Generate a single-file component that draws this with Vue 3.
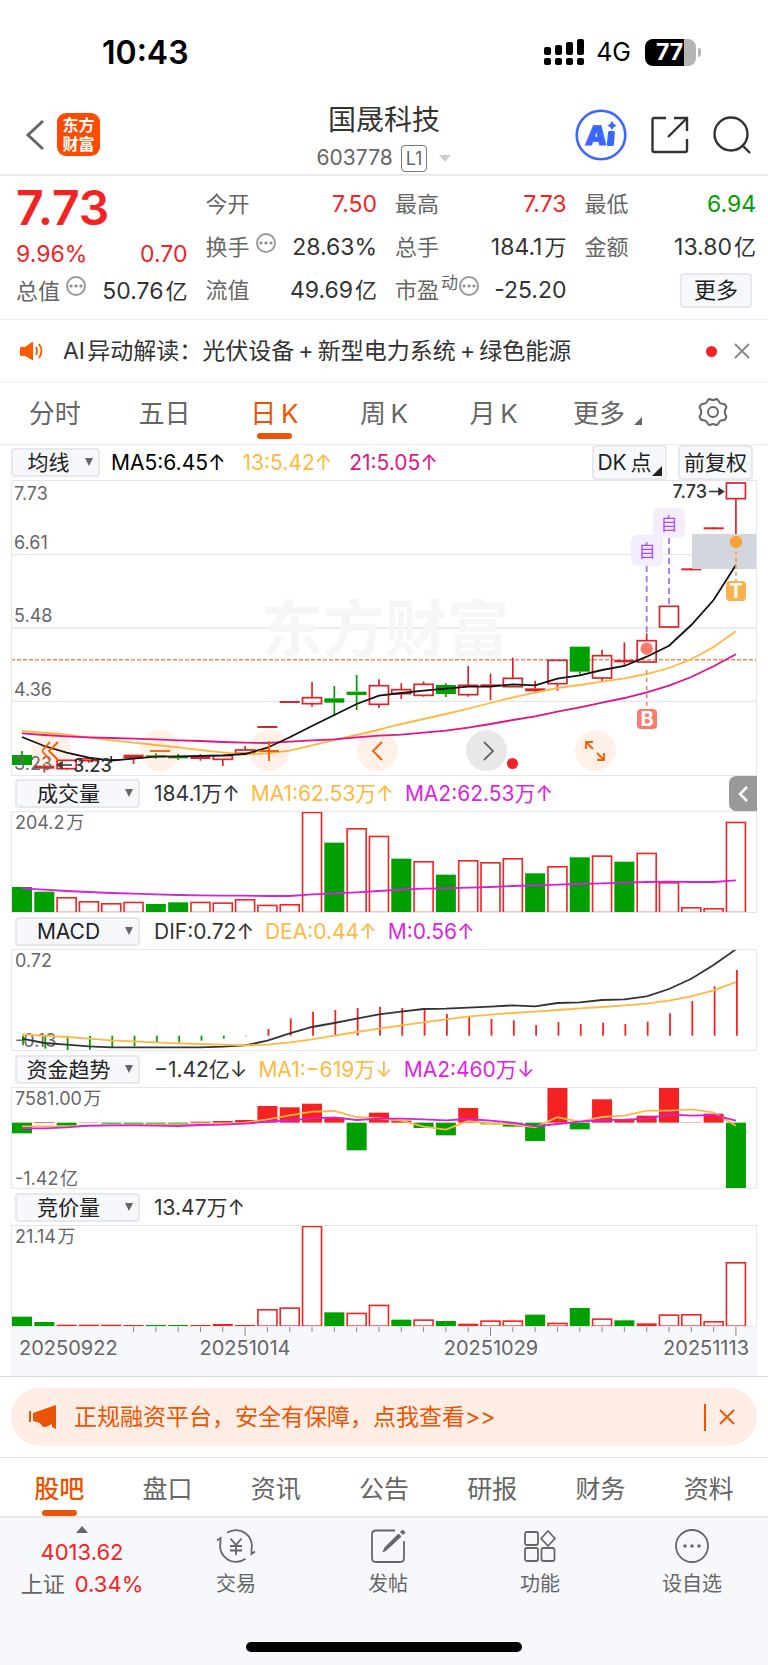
<script setup>
import { ref } from 'vue'

/* Series values are stored in device pixels (3 per CSS pixel), measured from the panel top. */
const STEP = 22.31
const BAR = 20
const cx = (i) => 11 + i * STEP
const line = (values, top) => values.map((v, i) => `${cx(i).toFixed(1)},${((v - top) / 3).toFixed(1)}`).join(' ')

/* [kind, body top, body bottom, high, low]; r = rising, g = falling, f = thin rising, n = flat */
const candleRows = [
  ['g', 855, 885, 843, 885], ['f', 887, 896, 881, 908], ['r', 871, 896, 871, 900], ['r', 866, 872, 862, 878],
  ['n', 867, 871, 858, 878], ['f', 854, 865, 854, 882], ['g', 856, 862, 850, 866], ['g', 859, 865, 852, 870],
  ['f', 860, 867, 852, 872], ['r', 857, 868, 857, 888], ['r', 840, 850, 828, 851], ['f', 768, 774, 770, 772],
  ['f', 693, 699, 695, 697], ['r', 683, 701, 636, 710], ['g', 685, 698, 648, 738], ['g', 665, 675, 615, 720],
  ['r', 647, 703, 628, 714], ['r', 659, 671, 640, 687], ['r', 643, 676, 634, 680], ['g', 645, 672, 640, 681],
  ['r', 646, 674, 588, 680], ['f', 643, 649, 611, 690], ['r', 625, 650, 563, 650], ['f', 655, 664, 632, 668],
  ['r', 571, 641, 571, 662], ['g', 530, 605, 530, 613], ['r', 557, 624, 540, 634], ['f', 570, 577, 517, 587],
  ['r', 512, 576, 490, 576], ['r', 409, 471, 409, 471], ['f', 295, 301, 297, 299], ['f', 172, 178, 174, 176],
  ['r', 39, 86, 39, 192]
]
const tone = { r: '#d4262c', f: '#d4262c', g: '#00a000', n: '#333333' }
const candles = candleRows.map(([kind, top, bottom, high, low], i) => ({
  x: cx(i), kind, color: tone[kind],
  top: (top - 30) / 3, bottom: (bottom - 30) / 3, high: (high - 30) / 3, low: (low - 30) / 3
}))
const ma5 = line([801, 828, 848, 863, 872, 866, 860, 859, 858, 856, 852, 833, 802, 768, 735, 702, 677, 669, 662, 656, 650, 650, 643, 646, 626, 616, 600, 588, 560, 527, 465, 390, 285], 30)
const ma13 = line([783, 788, 794, 802, 811, 818, 825, 832, 840, 847, 853, 850, 842, 826, 810, 795, 779, 762, 747, 732, 716, 699, 682, 668, 654, 645, 635, 625, 612, 594, 568, 531, 484], 30)
const ma21 = line([790, 795, 799, 802, 804, 806, 808, 811, 813, 816, 818, 819, 815, 811, 808, 802, 797, 794, 788, 782, 773, 762, 750, 739, 725, 712, 698, 684, 667, 647, 621, 589, 553], 30)

const green = (list) => new Set(list)
const columns = (tops, falling, base, panelTop) => tops.map((t, i) => ({
  x: cx(i), y: (t - panelTop) / 3, h: (base - t) / 3, down: falling.has(i)
}))
const volume = columns(
  [352, 366, 382, 394, 400, 396, 403, 398, 396, 398, 388, 405, 403, 126, 219, 175, 198, 267, 274, 315, 271, 277, 265, 311, 289, 263, 257, 276, 249, 337, 412, 415, 156],
  green([0, 1, 6, 7, 14, 17, 19, 23, 25, 27]), 431, 124)
const volumeMa = line([356, 360, 364, 367, 370, 372, 374, 376, 377, 378, 378, 379, 379, 374, 371, 368, 364, 360, 357, 356, 354, 352, 349, 347, 345, 343, 341, 339, 337, 336, 337, 337, 332], 124)

const macd = [826, 836, 842, 839, 833, 829, 818, 818, 812, 806, 799, 777, 745, 725, 720, 714, 710, 714, 718, 732, 740, 747, 751, 765, 756, 762, 758, 762, 755, 730, 693, 649, 600]
  .map((v, i) => ({ x: cx(i) + 1, y: (v - 537) / 3, up: v < 797 }))
const dif = line([806, 819, 824, 829, 832, 832, 832, 832, 832, 830, 826, 812, 790, 771, 759, 746, 733, 725, 717, 716, 713, 710, 706, 709, 699, 697, 690, 688, 679, 657, 626, 585, 538], 537)
const dea = line([793, 797, 801, 806, 811, 814, 817, 820, 822, 824, 826, 824, 817, 808, 797, 786, 776, 766, 757, 748, 740, 734, 729, 725, 720, 715, 711, 706, 701, 692, 679, 661, 636], 537)

const fund = [250, 216, 227, 217, 221, 221, 221, 221, 215, 213, 210, 168, 172, 161, 203, 301, 188, 212, 234, 256, 174, 223, 230, 273, 114, 238, 148, 210, 197, 113, 217, 191, 416]
  .map((v, i) => ({ x: cx(i), y: (Math.min(v, 218) - 111) / 3, h: Math.abs(v - 218) / 3, down: v > 218 }))
const fundMa1 = line([229, 229, 229, 228, 226, 225, 224, 224, 223, 222, 218, 208, 196, 185, 183, 201, 205, 212, 230, 239, 213, 221, 223, 232, 202, 215, 201, 197, 182, 182, 178, 187, 227], 111)
const fundMa2 = line([235, 235, 232, 227, 226, 226, 227, 228, 225, 224, 221, 215, 211, 205, 202, 210, 206, 206, 208, 211, 207, 212, 218, 229, 222, 215, 210, 209, 206, 193, 197, 195, 212], 111)

const auction = columns(
  [799, 815, 823, 823, 823, 824, 824, 824, 824, 821, 824, 776, 771, 526, 786, 787, 763, 808, 807, 812, 820, 810, 810, 793, 817, 773, 804, 810, 819, 792, 791, 812, 635],
  green([0, 1, 6, 7, 14, 17, 19, 23, 25, 27]), 830, 524)
const ticks = Array.from({ length: 28 }, (_, k) => k + 5).map((i) => ({ x: cx(i), h: [10, 21, 32].includes(i) ? 9 : 5 }))

const periods = ['分时', '五日', '日K', '周K', '月K', '更多']
const activePeriod = ref('日K')
const sections = ['股吧', '盘口', '资讯', '公告', '研报', '财务', '资料']
const activeSection = ref('股吧')
</script>

<template>
  <div class="page">
    <div class="status">
      <span class="clock">10:43</span>
      <div class="status-right">
        <svg width="40" height="28" viewBox="0 0 40 28" aria-hidden="true">
          <g fill="#000">
            <rect x="0" y="9" width="7" height="8" rx="2" /><rect x="11" y="7" width="7" height="10" rx="2" />
            <rect x="22" y="4" width="7" height="13" rx="2" /><rect x="33" y="1" width="7" height="16" rx="2" />
            <rect x="0" y="20" width="7" height="7" rx="2" /><rect x="11" y="20" width="7" height="7" rx="2" />
            <rect x="22" y="20" width="7" height="7" rx="2" /><rect x="33" y="20" width="7" height="7" rx="2" />
          </g>
        </svg>
        <span class="network">4G</span>
        <span class="battery"><span class="battery-level">77</span></span>
      </div>
    </div>

    <header class="header">
      <div class="header-left">
        <button class="icon-button" aria-label="返回">
          <svg width="20" height="32" viewBox="0 0 20 32"><path d="M18 2 L3 16 L18 30" fill="none" stroke="#666" stroke-width="3" /></svg>
        </button>
        <a href="#" class="brand"><span>东方</span><span>财富</span></a>
      </div>
      <div class="title">
        <h1>国晟科技</h1>
        <div class="code"><span>603778</span><span class="level">L1</span><svg width="12" height="7" viewBox="0 0 12 7"><path d="M0 0H12L6 7Z" fill="#ccc" /></svg></div>
      </div>
      <div class="header-right">
        <button class="icon-button" aria-label="AI">
          <svg width="52" height="52" viewBox="0 0 52 52">
            <circle cx="26" cy="26" r="24.3" fill="#fff" stroke="#3a68ff" stroke-width="2.600" />
            <g transform="skewX(-5)">
              <text x="13" y="36" class="ai-letter">A</text>
              <rect x="35" y="22" width="7" height="15" rx="1.500" fill="#3a68ff" />
            </g>
            <path d="M37 12 Q38.200 15.300 41.500 16.500 Q38.200 17.700 37 21 Q35.800 17.700 32.500 16.500 Q35.800 15.300 37 12Z" fill="#3a68ff" />
          </svg>
        </button>
        <button class="icon-button" aria-label="分享">
          <svg width="38" height="38" viewBox="0 0 38 38"><g fill="none" stroke="#333" stroke-width="2.400"><path d="M15 2H3Q1.500 2 1.500 4V34Q1.500 36 3.500 36H34Q36 36 36 34V23" /><path d="M23 2H36V15M35.500 2.500L17 21" /></g></svg>
        </button>
        <button class="icon-button" aria-label="搜索">
          <svg width="38" height="38" viewBox="0 0 38 38"><g fill="none" stroke="#333" stroke-width="2.400"><circle cx="18" cy="18" r="16.500" /><path d="M29 29L37 37" /></g></svg>
        </button>
      </div>
    </header>

    <section class="quote">
      <div class="quote-col">
        <div class="price">7.73</div>
        <div class="change"><span>9.96%</span><span>0.70</span></div>
        <div class="cell short"><span class="label">总值<i class="more-dot"></i></span><span>50.76<small>亿</small></span></div>
      </div>
      <div class="quote-col">
        <div class="cell"><span class="label">今开</span><span class="up">7.50</span></div>
        <div class="cell"><span class="label">换手<i class="more-dot"></i></span><span>28.63%</span></div>
        <div class="cell"><span class="label">流值</span><span>49.69<small>亿</small></span></div>
      </div>
      <div class="quote-col">
        <div class="cell"><span class="label">最高</span><span class="up">7.73</span></div>
        <div class="cell"><span class="label">总手</span><span>184.1<small>万</small></span></div>
        <div class="cell"><span class="label">市盈<sup>动</sup><i class="more-dot tight"></i></span><span>-25.20</span></div>
      </div>
      <div class="quote-col">
        <div class="cell"><span class="label">最低</span><span class="down">6.94</span></div>
        <div class="cell"><span class="label">金额</span><span>13.80<small>亿</small></span></div>
        <div class="cell end"><button class="chip more">更多</button></div>
      </div>
    </section>

    <div class="news">
      <svg width="24" height="20" viewBox="0 0 24 20" aria-hidden="true"><path d="M1 6H5L12 1Q13 0 13 2V18Q13 20 12 19L5 15H1Q0 15 0 14V7Q0 6 1 6Z" fill="#ff5a00" /><path d="M16 6Q18 10 16 14M19 3Q24 10 19 17" fill="none" stroke="#ff5a00" stroke-width="1.800" /></svg>
      <a href="#">AI&#8202;异动解读：光伏设备&#8201;+&#8201;新型电力系统&#8201;+&#8201;绿色能源</a>
      <span class="red-dot"></span>
      <button class="icon-button" aria-label="关闭"><svg width="16" height="16" viewBox="0 0 16 16"><path d="M1 1L15 15M15 1L1 15" stroke="#888" stroke-width="1.800" /></svg></button>
    </div>

    <nav class="periods">
      <button v-for="p in periods" :key="p" :class="{ active: p === activePeriod }" @click="activePeriod = p">{{ p.replace('K', '\u2009K') }}<i v-if="p === '更多'" class="corner"></i></button>
      <button class="gear" aria-label="设置">
        <svg width="30" height="30" viewBox="0 0 30 30"><g fill="none" stroke="#666" stroke-width="2"><path d="M10 3Q11 1.500 13 2.500Q15 3.600 17 2.500Q19 1.500 20 3L21.500 5.500Q22.500 6.800 24.500 6.700Q27 6.700 28 9Q28.800 10.500 27.500 12Q26 15 27.500 18Q28.800 19.500 28 21Q27 23.300 24.500 23.300Q22.500 23.200 21.500 24.500L20 27Q19 28.500 17 27.500Q15 26.400 13 27.500Q11 28.500 10 27L8.500 24.500Q7.500 23.200 5.500 23.300Q3 23.300 2 21Q1.200 19.500 2.500 18Q4 15 2.500 12Q1.200 10.500 2 9Q3 6.700 5.500 6.700Q7.500 6.800 8.500 5.500Z" /><circle cx="15" cy="15" r="5" /></g></svg>
      </button>
    </nav>

    <main class="charts">
      <div class="bar-head main-head">
        <button class="chip select narrow">均线</button>
        <div class="values wide"><span class="black">MA5:6.45<b>↑</b></span><span class="yellow">13:5.42<b>↑</b></span><span class="pink">21:5.05<b>↑</b></span></div>
        <button class="chip tall dk">DK&#8201;点<i class="corner dark"></i></button>
        <button class="chip tall">前复权</button>
      </div>

      <div class="panel">
        <svg class="plot" viewBox="0 0 746 296">
          <g stroke="#e1e5ee" stroke-width="1.300"><path d="M0 74.700H746M0 148H746M0 221.300H746" /></g>
          <text x="374" y="172" class="watermark">东方财富</text>
          <path d="M0 179.700H746" stroke="#f08a55" stroke-width="1.600" stroke-dasharray="4 2" />
          <g v-for="(c, i) in candles" :key="i" :stroke="c.color" stroke-width="1.700">
            <line :x1="c.x" :x2="c.x" :y1="c.high" :y2="c.top" />
            <line :x1="c.x" :x2="c.x" :y1="c.bottom" :y2="c.low" />
            <rect v-if="c.kind === 'r'" :x="c.x - 9.500" :y="c.top" width="19" :height="c.bottom - c.top" fill="none" />
            <rect v-else :x="c.x - 10" :y="c.top" width="20" :height="c.bottom - c.top" :fill="c.color" stroke="none" />
          </g>
          <rect x="681" y="54" width="65" height="35" fill="#d3d6dc" />
          <g fill="none" stroke-width="1.800">
            <polyline :points="ma13" stroke="#ffb840" /><polyline :points="ma21" stroke="#e0148c" /><polyline :points="ma5" stroke="#111" />
          </g>
          <g stroke="#b06cff" stroke-width="1.800" stroke-dasharray="6 4"><path d="M635.700 86V153M658 58V126" /></g>
          <g fill="#f4edfe"><rect x="620" y="55" width="32" height="31" rx="6" /><rect x="642" y="28" width="32" height="30" rx="6" /></g>
          <text x="636" y="77" class="flag">自</text><text x="658" y="50" class="flag">自</text>
          <circle cx="635.700" cy="168.700" r="6.200" fill="#ff7a6b" />
          <path d="M635.700 190V228" stroke="#ff7a6b" stroke-width="1.500" stroke-dasharray="4 4" />
          <rect x="626" y="229" width="20" height="20" rx="4" fill="#ff7a6b" /><text x="636" y="246" class="mark">B</text>
          <path d="M725 64V101" stroke="#f7a23b" stroke-width="1.500" stroke-dasharray="4 3" />
          <circle cx="725" cy="62" r="6.200" fill="#f7a23b" />
          <rect x="715" y="101" width="20" height="20" rx="4" fill="#ffb04d" /><text x="725" y="118" class="mark">T</text>
          <path d="M698 11.500H712M708 8.500L712.500 11.500L708 14.500Z" stroke="#333" fill="#333" stroke-width="1.500" />
          <path d="M61 285H48M51 282L46.500 285L51 288Z" stroke="#333" fill="#333" stroke-width="1.500" />
          <text x="696" y="18" class="peak end-anchor">7.73</text>
          <text x="62" y="292" class="peak">3.23</text>
          <g class="axis"><text x="3" y="20">7.73</text><text x="3" y="69">6.61</text><text x="3" y="142">5.48</text><text x="3" y="216">4.36</text><text x="3" y="290">3.23</text></g>
        </svg>
        <div class="tools">
          <button aria-label="最左"><svg width="20" height="20" viewBox="0 0 20 20"><path d="M8 1L0 10L8 19M16 1L7 10L16 19" /></svg></button>
          <button aria-label="缩小"><svg width="20" height="20" viewBox="0 0 20 20"><path d="M0 10H20" /></svg></button>
          <button aria-label="放大"><svg width="20" height="20" viewBox="0 0 20 20"><path d="M0 10H20M10 0V20" /></svg></button>
          <button aria-label="左移"><svg width="20" height="20" viewBox="0 0 20 20"><path d="M14 1L5 10L14 19" /></svg></button>
          <button class="grey" aria-label="右移"><svg width="20" height="20" viewBox="0 0 20 20"><path d="M7 1L16 10L7 19" /></svg></button>
          <button aria-label="全屏"><svg width="20" height="20" viewBox="0 0 20 20"><path d="M1 8V1H8M1 1L8 8M19 12V19H12M19 19L12 12" /></svg></button>
          <span class="red-dot tool-dot"></span>
        </div>
      </div>

      <div class="bar-head">
        <button class="chip select">成交量</button>
        <div class="values"><span>184.1万<b>↑</b></span><span class="yellow">MA1:62.53万<b>↑</b></span><span class="purple">MA2:62.53万<b>↑</b></span></div>
        <button class="collapse" aria-label="展开"><svg width="10" height="16" viewBox="0 0 10 16"><path d="M9 1L2 8L9 15" fill="none" stroke="#fff" stroke-width="2.500" /></svg></button>
      </div>
      <div class="panel sub">
        <svg class="plot" viewBox="0 0 746 102">
          <g v-for="(b, i) in volume" :key="i">
            <rect v-if="b.down" :x="b.x - BAR / 2" :y="b.y" :width="BAR" :height="b.h" fill="#00a000" />
            <rect v-else :x="b.x - 9.500" :y="b.y + 0.800" width="19" :height="b.h - 1.600" fill="#fff" stroke="#f52222" stroke-width="1.600" />
          </g>
          <polyline :points="volumeMa" fill="none" stroke="#d61fe0" stroke-width="1.800" />
          <text x="4" y="18" class="axis">204.2&#8202;万</text>
        </svg>
      </div>

      <div class="bar-head">
        <button class="chip select">MACD</button>
        <div class="values"><span>DIF:0.72<b>↑</b></span><span class="yellow">DEA:0.44<b>↑</b></span><span class="purple">M:0.56<b>↑</b></span></div>
      </div>
      <div class="panel sub">
        <svg class="plot" viewBox="0 0 746 102">
          <line v-for="(b, i) in macd" :key="i" :x1="b.x" :x2="b.x" y1="86.700" :y2="b.y" :stroke="b.up ? '#f52222' : '#00a000'" stroke-width="1.800" />
          <text x="4" y="18" class="axis">0.72</text><text x="4" y="98" class="axis">-0.13</text>
          <polyline :points="dif" fill="none" stroke="#333" stroke-width="1.800" />
          <polyline :points="dea" fill="none" stroke="#ffb840" stroke-width="1.800" />
        </svg>
      </div>

      <div class="bar-head">
        <button class="chip select">资金趋势</button>
        <div class="values"><span>−1.42亿<b>↓</b></span><span class="yellow">MA1:−619万<b>↓</b></span><span class="purple">MA2:460万<b>↓</b></span></div>
      </div>
      <div class="panel sub">
        <svg class="plot" viewBox="0 0 746 102">
          <rect v-for="(b, i) in fund" :key="i" :x="b.x - BAR / 2" :y="b.y" :width="BAR" :height="b.h" :fill="b.down ? '#00a000' : '#f52222'" />
          <polyline :points="fundMa1" fill="none" stroke="#ffb840" stroke-width="1.800" />
          <polyline :points="fundMa2" fill="none" stroke="#d61fe0" stroke-width="1.800" />
          <text x="4" y="18" class="axis">7581.00&#8202;万</text><text x="4" y="98" class="axis">-1.42&#8202;亿</text>
        </svg>
      </div>

      <div class="bar-head">
        <button class="chip select">竞价量</button>
        <div class="values"><span>13.47万<b>↑</b></span></div>
      </div>
      <div class="panel">
        <svg class="plot" viewBox="0 0 746 102">
          <g v-for="(b, i) in auction" :key="i">
            <rect v-if="b.down || b.h < 4" :x="b.x - BAR / 2" :y="b.y" :width="BAR" :height="b.h" :fill="b.down ? '#00a000' : '#f52222'" />
            <rect v-else :x="b.x - 9.500" :y="b.y + 0.800" width="19" :height="b.h - 1.600" fill="#fff" stroke="#f52222" stroke-width="1.600" />
          </g>
          <text x="4" y="18" class="axis">21.14&#8202;万</text>
        </svg>
      </div>
      <div class="time-axis">
        <svg class="plot" viewBox="0 0 746 49">
          <line v-for="t in ticks" :key="t.x" :x1="t.x" :x2="t.x" y1="0" :y2="t.h" stroke="#888" />
          <g class="dates"><text x="8" y="28">20250922</text><text x="234" y="28" class="mid-anchor">20251014</text><text x="480" y="28" class="mid-anchor">20251029</text><text x="738" y="28" class="end-anchor">20251113</text></g>
        </svg>
      </div>
    </main>

    <div class="ad-wrap">
      <div class="ad">
        <svg width="27" height="24" viewBox="0 0 27 24" aria-hidden="true"><path d="M0 6H2V17H0ZM4 8L27 0V24L23 22V19L19 21Q14 24 11 18L4 16Z" fill="#ea5504" /></svg>
        <a href="#">正规融资平台，安全有保障，点我查看&gt;&gt;</a>
        <span class="divider"></span>
        <button class="icon-button" aria-label="关闭广告"><svg width="16" height="16" viewBox="0 0 16 16"><path d="M1 1L15 15M15 1L1 15" stroke="#ea5504" stroke-width="1.800" /></svg></button>
      </div>
    </div>

    <nav class="sections">
      <button v-for="s in sections" :key="s" :class="{ active: s === activeSection }" @click="activeSection = s">{{ s }}</button>
    </nav>

    <footer class="footer">
      <div class="dock">
        <a href="#" class="index">
          <svg width="12" height="7" viewBox="0 0 12 7"><path d="M0 7H12L6 0Z" fill="#666" /></svg>
          <span class="up">4013.62</span>
          <span class="index-name">上证<span class="up">0.34%</span></span>
        </a>
        <button>
          <svg width="40" height="36" viewBox="0 0 40 36"><g fill="none" stroke="#666" stroke-width="1.800"><path d="M11 4.800A16 16 0 0 1 35.500 22V26L39 23.500M29.500 30.800A16 16 0 0 1 4.500 14V10L1 12.500" /><path d="M14.500 10.500L20 17L25.500 10.500M20 17V27M14 18H26M14 22.500H26" /></g></svg>
          <span>交易</span>
        </button>
        <button>
          <svg width="36" height="36" viewBox="0 0 36 36"><path d="M25 2.500H6Q2 2.500 2 6.500V30Q2 34 6 34H30Q34 34 34 30V13" fill="none" stroke="#666" stroke-width="1.800" /><path d="M28.500 6L31 8.500L17 21.500L13 24L15 19.500ZM30.500 4L32.500 2L35 4.500L33 6.500Z" fill="#666" stroke="#666" /></svg>
          <span>发帖</span>
        </button>
        <button>
          <svg width="32" height="36" viewBox="0 0 32 36"><g fill="none" stroke="#666" stroke-width="1.800"><rect x="1" y="4" width="13" height="13" rx="2" /><rect x="1" y="20" width="13" height="13" rx="2" /><rect x="17.500" y="20" width="13" height="13" rx="2" /><path d="M24 3L31 10.500L24 18L17 10.500Z" stroke-linejoin="round" /></g></svg>
          <span>功能</span>
        </button>
        <button>
          <svg width="36" height="36" viewBox="0 0 36 36"><circle cx="18" cy="18" r="16" fill="none" stroke="#666" stroke-width="1.800" /><g fill="#666"><circle cx="11" cy="18" r="1.800" /><circle cx="18" cy="18" r="1.800" /><circle cx="25" cy="18" r="1.800" /></g></svg>
          <span>设自选</span>
        </button>
      </div>
      <div class="home-bar"></div>
    </footer>
  </div>
</template>

<style>
body { margin: 0; background: #fff; }
</style>

<style scoped>
.page { font-family: Inter, "Noto Sans CJK SC", sans-serif; color: #333; background: #fff; }
.page * { box-sizing: border-box; }
button { font: inherit; color: inherit; border: 0; background: none; padding: 0; margin: 0; }
a { color: inherit; text-decoration: none; }
svg { display: block; }
i, b { font-style: normal; font-weight: inherit; }
.icon-button { display: flex; }
.up { color: #f52222; }
.down { color: #00a000; }

.status { display: flex; justify-content: space-between; align-items: center; height: 95px; padding: 9px 72px 0 102px; color: #000; }
.clock { font-size: 32px; font-weight: 600; }
.status-right { display: flex; align-items: center; }
.network { margin: 0 14px 0 12px; font-size: 25px; font-weight: 400; }
.battery { position: relative; width: 51px; height: 27px; border-radius: 8px; background: linear-gradient(90deg, #000 77%, #b4b4b4 77%); color: #fff; }
.battery::after { content: ""; position: absolute; right: -5px; top: 9px; width: 3px; height: 9px; border-radius: 0 3px 3px 0; background: #b4b4b4; }
.battery-level { display: block; padding-left: 11px; font-size: 23px; line-height: 27px; font-weight: 700; }

.header { display: grid; grid-template-columns: 1fr auto 1fr; align-items: center; height: 81px; padding: 0 17px; border-bottom: 2px solid #ececec; }
.header-left { display: flex; align-items: center; gap: 12px; padding-left: 8px; }
.brand { display: flex; flex-direction: column; align-items: center; justify-content: center; width: 43px; height: 43px; border-radius: 9px; background: #ff4a00; color: #fff; font-size: 16px; line-height: 19px; font-weight: 700; }
.title { padding-top: 4px; text-align: center; }
h1 { margin: 0; font-size: 28px; line-height: 43px; font-weight: 400; }
.code { display: flex; align-items: center; justify-content: center; gap: 8px; font-size: 21px; line-height: 32px; color: #666; }
.level { height: 27px; padding: 0 4px; border: 1px solid #777; border-radius: 4px; font-size: 18px; line-height: 25px; }
.code svg { margin-left: 4px; }
.header-right { display: flex; justify-content: flex-end; align-items: center; gap: 24px; }
.ai-letter { font-family: Inter, sans-serif; font-size: 27px; font-weight: 900; fill: #3a68ff; stroke: #3a68ff; stroke-width: 1; }

.quote { display: grid; grid-template-columns: repeat(4, 1fr); gap: 18px; padding: 7px 12px 7px 16px; border-bottom: 1px solid #eee; font-size: 23px; }
.price { height: 48px; line-height: 50px; font-size: 48px; font-weight: 600; color: #f52222; }
.change { display: flex; justify-content: space-between; height: 43px; line-height: 46px; color: #f52222; }
.cell { display: flex; justify-content: space-between; align-items: center; height: 43px; line-height: 43px; white-space: nowrap; }
.cell.short { height: 34px; }
.cell.end { justify-content: flex-end; }
small { margin-left: 2px; font-size: 22px; }
.label { display: flex; align-items: center; font-size: 22px; color: #666; }
sup { align-self: flex-start; margin: 0 0 0 2px; font-size: 17px; line-height: 28px; }
.more-dot { width: 20px; height: 20px; margin: 0 0 10px 6px; border: 2px solid #999; border-radius: 50%; background: radial-gradient(circle, #888 1px, transparent 2px) center / 5px 16px; background-clip: content-box; padding: 0 1px; }
.more-dot.tight { margin-left: 1px; }
.chip { border: 2px solid #e6e8ec; border-radius: 4px; background: #f7f8fb; color: #222; text-align: center; white-space: nowrap; }
.more { width: 72px; height: 35px; margin-right: 4px; font-size: 22px; line-height: 29px; }

.news { display: flex; align-items: center; height: 63px; padding: 0 18px 0 20px; border-bottom: 1px solid #eee; font-size: 23px; line-height: 32px; }
.news a { flex: 1; margin-left: 19px; white-space: nowrap; }
.red-dot { width: 11px; height: 11px; border-radius: 50%; background: #f52222; }
.news .red-dot { margin-right: 17px; }

.periods { display: grid; grid-template-columns: repeat(7, 1fr); height: 62px; border-bottom: 1px solid #eee; font-size: 26px; color: #666; }
.periods button, .sections button { position: relative; display: flex; align-items: center; justify-content: center; white-space: nowrap; }
.periods button { padding-bottom: 4px; }
.periods .active, .sections .active { color: #ea5504; }
.periods .active::after, .sections .active::after { content: ""; position: absolute; bottom: 5px; width: 35px; height: 6px; border-radius: 3px; background: #ea5504; }
.corner { align-self: flex-end; margin: 0 -8px 15px 9px; border-left: 8px solid transparent; border-bottom: 8px solid #666; }

.charts { margin: 0 11px; }
.bar-head { display: flex; align-items: center; height: 35px; padding-left: 4px; font-size: 21px; }
.main-head { padding: 0 4px 0 0; gap: 11px; }
.main-head .values { margin: 0; flex: 1; }
.select { position: relative; width: 125px; height: 29px; padding-right: 18px; font-size: 21px; line-height: 25px; }
.select::after { content: ""; position: absolute; right: 5px; top: 8px; border: 4px solid transparent; border-top: 8px solid #666; border-bottom: 0; }
.select.narrow { width: 89px; padding-right: 14px; }
.tall { height: 35px; width: 75px; font-size: 21px; line-height: 31px; }
.dk { position: relative; padding-right: 10px; }
.dk .corner { position: absolute; right: 3px; bottom: 2px; margin: 0; border-left-width: 10px; border-bottom: 10px solid #222; }
.values { display: flex; gap: 11px; margin-left: 14px; line-height: 32px; white-space: nowrap; }
.values.wide { gap: 17px; }
.black { color: #000; }
.yellow { color: #ffb840; }
.pink { color: #e0148c; }
.purple { color: #e01fe0; }
.collapse { display: flex; align-items: center; justify-content: center; width: 28px; height: 35px; margin-left: auto; border-radius: 7px 0 0 7px; background: #999; }
.panel { position: relative; outline: 1px solid #e4e6ea; outline-offset: -1px; }
.panel.sub { margin-bottom: 1px; }
.plot { width: 100%; height: auto; }
.axis { font-size: 18px; fill: #666; }
.peak { font-size: 18px; fill: #333; font-weight: 500; }
.end-anchor { text-anchor: end; }
.mid-anchor { text-anchor: middle; }
.watermark { font-size: 62px; font-weight: 700; fill: #f6f6f6; text-anchor: middle; }
.flag { font-size: 17px; fill: #a64dff; text-anchor: middle; }
.mark { font-size: 20px; font-weight: 700; fill: #fff; text-anchor: middle; }
.tools { position: absolute; left: 20px; width: 78.4%; bottom: 5px; display: flex; justify-content: space-between; }
.tools button { display: flex; align-items: center; justify-content: center; width: 41px; height: 41px; border-radius: 50%; background: rgba(255, 90, 0, 0.09); }
.tools path { fill: none; stroke: #ff5a00; stroke-width: 1.800; }
.tools .grey { background: #e8e8e8; }
.tools .grey path { stroke: #666; }
.tool-dot { position: absolute; left: 81.4%; bottom: 2px; }
.time-axis { background: #f7f8fb; }
.dates { font-size: 20px; fill: #666; }

.ad-wrap { padding: 11px; border-top: 1px solid #dcdce0; border-bottom: 1px solid #e4e4e4; }
.ad { display: flex; align-items: center; height: 58px; padding: 0 22px 0 18px; border-radius: 29px; background: #fdede5; color: #ea5504; font-size: 23px; line-height: 32px; }
.ad a { flex: 1; margin-left: 18px; white-space: nowrap; }
.divider { width: 2px; height: 27px; margin-right: 13px; background: #ea5504; }

.sections { display: grid; grid-template-columns: repeat(7, 1fr); height: 60px; padding: 0 5px; border-bottom: 2px solid #e8e8ec; font-size: 25px; color: #666; }
.sections .active { font-weight: 500; }
.sections .active::after { bottom: 0; }

.footer { height: 148px; display: flex; flex-direction: column; justify-content: space-between; align-items: center; background: #f7f8fb; }
.dock { display: grid; grid-template-columns: 160fr 152fr 152fr 152fr 152fr; width: 100%; padding-top: 8px; font-size: 20px; color: #666; }
.dock button, .index { display: flex; flex-direction: column; align-items: center; white-space: nowrap; }
.dock button { gap: 5px; padding-top: 2px; line-height: 30px; }
.index { padding-left: 4px; font-size: 22px; line-height: 32px; }
.index-name { display: flex; gap: 10px; }
.index svg { margin-bottom: 3px; }
.home-bar { width: 276px; height: 10px; margin-bottom: 14px; border-radius: 5px; background: #000; }
</style>
